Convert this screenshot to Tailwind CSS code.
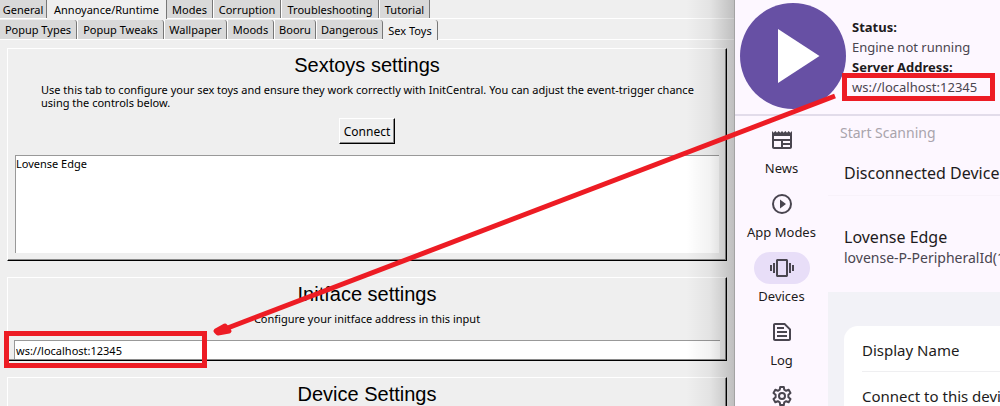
<!DOCTYPE html>
<html lang="en">
<head>
<meta charset="utf-8">
<title>Sex Toys settings</title>
<script src="https://cdn.jsdelivr.net/npm/@tailwindcss/browser@4"></script>
</head>
<body class="relative h-screen overflow-hidden bg-[#efefef] text-black">
<div class="grid h-full grid-cols-[735fr_265fr]">
  <main class="relative min-w-0 overflow-hidden border-r border-[#a3a3a3] bg-[#efefef] font-['Noto_Sans',sans-serif] text-[11px] leading-[13px]">
    <div role="tablist" aria-label="Sections" class="flex h-[19px] border-b border-white">
      <button role="tab" class="w-[47px] border-r border-[#777] bg-[#d9d9d9]">General</button>
      <button role="tab" aria-selected="true" class="-mb-px w-[120px] border-r border-[#777] bg-[#efefef]">Annoyance/Runtime</button>
      <button role="tab" class="w-[46px] border-r border-[#777] bg-[#d9d9d9]">Modes</button>
      <button role="tab" class="w-[68px] border-r border-l border-r-[#777] border-l-white bg-[#d9d9d9]">Corruption</button>
      <button role="tab" class="w-[98px] border-r border-l border-r-[#777] border-l-white bg-[#d9d9d9]">Troubleshooting</button>
      <button role="tab" class="w-[51px] border-r border-l border-r-[#777] border-l-white bg-[#d9d9d9]">Tutorial</button>
    </div>
    <div role="tablist" aria-label="Annoyance sections" class="flex h-[21px] border-b border-white pt-px">
      <button role="tab" class="w-[77px] rounded-tr-[3px] border-r border-[#777] bg-[#d9d9d9]">Popup Types</button>
      <button role="tab" class="w-[87px] rounded-tr-[3px] border-r border-l border-r-[#777] border-l-white bg-[#d9d9d9]">Popup Tweaks</button>
      <button role="tab" class="w-[63px] rounded-tr-[3px] border-r border-l border-r-[#777] border-l-white bg-[#d9d9d9]">Wallpaper</button>
      <button role="tab" class="w-[47px] rounded-tr-[3px] border-r border-l border-r-[#777] border-l-white bg-[#d9d9d9]">Moods</button>
      <button role="tab" class="w-[42px] rounded-tr-[3px] border-r border-l border-r-[#777] border-l-white bg-[#d9d9d9]">Booru</button>
      <button role="tab" class="w-[67px] rounded-tr-[3px] border-r border-l border-r-[#777] border-l-white bg-[#d9d9d9]">Dangerous</button>
      <button role="tab" aria-selected="true" class="-mb-px w-[55px] rounded-tr-[3px] border-r border-[#777] bg-[#efefef]">Sex Toys</button>
    </div>

    <div class="flex flex-col gap-4 pt-2 pr-[7px] pl-[7px]">
      <section class="border border-t-white border-r-black border-b-black border-l-white shadow-[inset_-1px_-1px_#8a8a8a]">
        <div class="flex flex-col items-center px-[7px] pt-1 pb-[7px]">
          <h2 class="font-['Liberation_Sans',sans-serif] text-[20px] leading-6">Sextoys settings</h2>
          <p class="w-full pt-[6px] pl-[26px]">Use this tab to configure your sex toys and ensure they work correctly with InitCentral. You can adjust the event-trigger chance<br>using the controls below.</p>
          <button class="mt-[9px] h-[26px] w-14 border border-t-white border-r-black border-b-black border-l-white text-[12px] shadow-[inset_-1px_-1px_#8a8a8a]">Connect</button>
          <select size="6" aria-label="Connected toys" class="mt-[11px] block h-[98px] w-full overflow-hidden border-t border-l border-[#999] bg-white outline-none"><option class="p-0 leading-4">Lovense Edge</option></select>
        </div>
      </section>
      <section class="border border-t-white border-r-black border-b-black border-l-white shadow-[inset_-1px_-1px_#8a8a8a]">
        <div class="flex flex-col items-center px-[6px] pt-1 pb-px">
          <h2 class="font-['Liberation_Sans',sans-serif] text-[20px] leading-6">Initface settings</h2>
          <label for="address" class="pt-[6px]">Configure your initface address in this input</label>
          <input id="address" value="ws://localhost:12345" class="mt-[15px] block h-[19px] w-full border-t border-l border-[#999] bg-white pl-px outline-none">
        </div>
      </section>
      <section class="border-t border-r border-l border-t-white border-r-black border-l-white shadow-[inset_-1px_0_#8a8a8a]">
        <h2 class="h-20 pt-1 text-center font-['Liberation_Sans',sans-serif] text-[20px] leading-6">Device Settings</h2>
      </section>
    </div>
    <div class="pointer-events-none absolute inset-y-0 right-0 w-12 bg-linear-to-r from-black/0 via-black/5 to-black/20"></div>
  </main>

  <aside class="flex min-w-0 flex-col overflow-hidden bg-[#fdf7ff] font-['Noto_Sans',sans-serif] text-[#1d1b20]">
    <header class="flex h-[116px] shrink-0 gap-[6px] border-b-2 border-[#e2dcea] pt-[3px] pl-[5px]">
      <button aria-label="Start engine" class="size-[106px] shrink-0 rounded-full bg-[#6750a4]">
        <svg viewBox="0 0 106 106" class="size-full"><path d="M38 26L79.500 53L38 80Z" fill="#fff"/></svg>
      </button>
      <dl class="pt-[14px] text-[13px] leading-5 whitespace-nowrap">
        <dt class="font-bold">Status:</dt><dd class="text-[#49454f]">Engine not running</dd>
        <dt class="font-bold">Server Address:</dt><dd class="text-[#49454f]">ws://localhost:12345</dd>
      </dl>
    </header>
    <div class="flex min-h-0 flex-1">
      <nav aria-label="Main" class="flex w-[93px] shrink-0 flex-col text-[13px] leading-4 text-[#1d1b20]">
        <button class="flex h-16 shrink-0 flex-col items-center gap-1 pt-2"><span class="flex h-8 w-14 items-center justify-center rounded-full"><svg viewBox="0 0 24 24" class="size-6" fill="#49454f"><path d="M22 3l-1.670 1.670L18.670 3 17 4.670 15.330 3l-1.660 1.670L12 3l-1.670 1.670L8.670 3 7 4.670 5.330 3 3.670 4.670 2 3v16c0 1.100.9 2 2 2h16c1.100 0 2-.9 2-2V3zM11 19H4v-6h7v6zm9 0h-7v-2h7v2zm0-4h-7v-2h7v2zm0-4H4V8h16v3z"/></svg></span>News</button>
        <button class="flex h-16 shrink-0 flex-col items-center gap-1 pt-2"><span class="flex h-8 w-14 items-center justify-center rounded-full"><svg viewBox="0 0 24 24" class="size-6" fill="#49454f"><path d="M10 16.500l6-4.500-6-4.500zM12 2a10 10 0 1 0 0 20 10 10 0 0 0 0-20zm0 18a8 8 0 1 1 0-16 8 8 0 0 1 0 16z"/></svg></span>App Modes</button>
        <button aria-current="page" class="flex h-16 shrink-0 flex-col items-center gap-1 pt-2"><span class="flex h-8 w-14 items-center justify-center rounded-full bg-[#e8def8]"><svg viewBox="0 0 24 24" class="size-6" fill="#49454f"><path d="M0 15h2V9H0v6zm3 2h2V7H3v10zm19-8v6h2V9h-2zm-3 8h2V7h-2v10zM16.500 3h-9C6.670 3 6 3.670 6 4.500v15c0 .83.67 1.500 1.500 1.500h9c.83 0 1.500-.67 1.500-1.500v-15c0-.83-.67-1.500-1.500-1.500zM16 19H8V5h8v14z"/></svg></span>Devices</button>
        <button class="flex h-16 shrink-0 flex-col items-center gap-1 pt-2"><span class="flex h-8 w-14 items-center justify-center rounded-full"><svg viewBox="0 0 24 24" class="size-6" fill="#49454f"><path d="M15 3H5c-1.100 0-2 .9-2 2v14c0 1.100.9 2 2 2h14c1.100 0 2-.9 2-2V9l-6-6zm4 16H5V5h9.200L19 9.800V19zM7 7h7v2H7zm0 4h10v2H7zm0 4h10v2H7z"/></svg></span>Log</button>
        <button aria-label="Settings" class="flex h-16 shrink-0 flex-col items-center gap-1 pt-2"><span class="flex h-8 w-14 items-center justify-center rounded-full"><svg viewBox="0 0 24 24" class="size-6" fill="none" stroke="#49454f" stroke-width="2" stroke-linejoin="round"><path d="M10.200 3h3.600l.45 2.700 1.900 1.100 2.550-1 1.800 3.100-2.100 1.750v2.700l2.100 1.750-1.800 3.100-2.550-1-1.900 1.100-.45 2.700h-3.600l-.45-2.700-1.900-1.100-2.550 1-1.800-3.100 2.100-1.750v-2.700L3.500 8.900l1.800-3.100 2.550 1 1.900-1.100z"/><circle cx="12" cy="12" r="3"/></svg></span></button>
      </nav>
      <div class="flex min-w-0 flex-1 flex-col whitespace-nowrap">
        <button class="mt-[7px] ml-3 h-5 shrink-0 text-left text-[14px] leading-5 text-[#a9a4ac]">Start Scanning</button>
        <h2 class="h-[53px] shrink-0 border-b border-[#f8f2fa] pt-[18px] pl-4 text-[16px] leading-6">Disconnected Devices</h2>
        <div class="h-24 shrink-0 pt-[29px] pl-4">
          <p class="text-[16px] leading-6">Lovense Edge</p>
          <p class="text-[14px] leading-[18px] text-[#49454f]">lovense-P-PeripheralId(1)</p>
        </div>
        <div class="flex-1 bg-[#f2f2f7] pt-[34px] pl-4 text-[15px] leading-6 text-[#1d1b20]">
          <div class="h-40 rounded-tl-[14px] bg-white pl-[18px]">
            <p class="h-[46px] border-b border-[#efeff1] pt-3">Display Name</p>
            <p class="pt-3">Connect to this device</p>
          </div>
        </div>
      </div>
    </div>
  </aside>
</div>

<svg aria-hidden="true" viewBox="0 0 1000 406" class="pointer-events-none absolute inset-0 size-full" fill="none" stroke="#ed1c24" stroke-width="5">
  <rect x="6.500" y="333.500" width="198" height="32"/>
  <rect x="844.500" y="75.500" width="148" height="23"/>
  <path d="M835 96L225 329"/>
  <path d="M216 331L225 326L229 331L218 333Z" fill="#ed1c24" stroke-linejoin="round"/>
</svg>
</body>
</html>
